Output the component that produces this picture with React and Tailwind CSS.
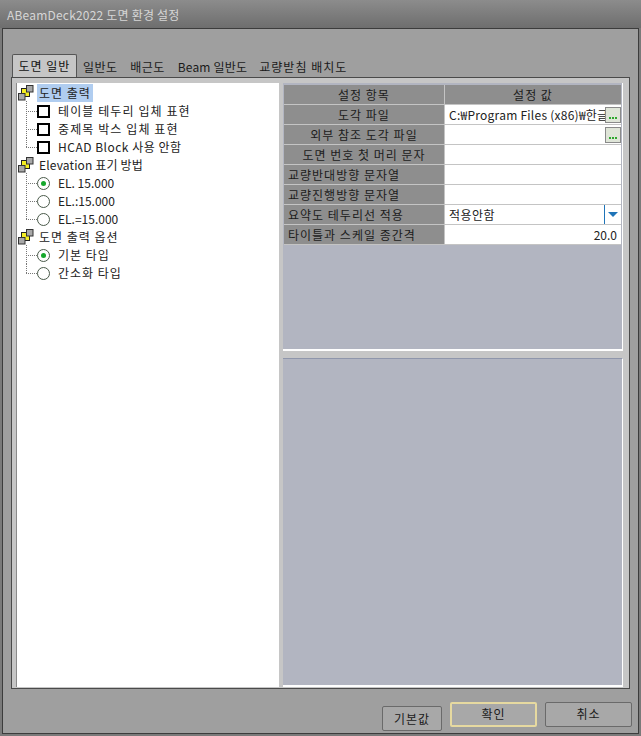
import React from 'react';

const font = { fontFamily: '"Noto Sans CJK KR", "Liberation Sans", sans-serif' };

// group icon of the tree: grey, yellow and grey squares
const GroupIcon = () => (
  <svg width="16" height="16" viewBox="0 0 16 16" className="shrink-0">
    <rect x="3.5" y="3.5" width="8" height="8" fill="#f4ee22" stroke="#222" />
    <rect x="8.5" y="0.5" width="6.5" height="6.5" fill="#a8a8a8" stroke="#333" />
    <rect x="0.5" y="8.5" width="6.5" height="6.5" fill="#a8a8a8" stroke="#333" />
  </svg>
);

const Dots = ({ last }) => (
  <div className="relative w-[11px] h-[18px] shrink-0">
    <div className={`absolute left-0 top-[-1px] w-px border-l border-dotted border-[#777] ${last ? 'h-[10px]' : 'h-[19px]'}`} />
    <div className="absolute left-0 top-[9px] w-[11px] border-t border-dotted border-[#777]" />
  </div>
);

const CheckItem = ({ label, last, track = 'tracking-[1.1px]' }) => (
  <div className="flex items-center h-[18px] pl-[9px]">
    <Dots last={last} />
    <div className="w-[13px] h-[13px] border-2 border-black bg-white shrink-0" />
    <span className={`ml-[8px] text-[12px] text-[#222] whitespace-nowrap ${track}`}>{label}</span>
  </div>
);

const RadioItem = ({ label, on, last, track = '' }) => (
  <div className="flex items-center h-[18px] pl-[9px]">
    <Dots last={last} />
    <div className="w-[13px] h-[13px] rounded-full border border-[#4a5a4a] bg-white shrink-0 flex items-center justify-center">
      {on && <div className="w-[5px] h-[5px] rounded-full bg-[#16a82c]" />}
    </div>
    <span className={`ml-[8px] text-[12px] text-[#222] whitespace-nowrap ${track}`}>{label}</span>
  </div>
);

const GroupItem = ({ label, selected, track = 'tracking-[1px]' }) => (
  <div className="flex items-center h-[18px] pl-[1px]">
    <GroupIcon />
    <span className={`ml-[3px] text-[12px] text-[#222] px-[2px] h-[18px] leading-[18px] whitespace-nowrap ${track} ${selected ? 'bg-[#b0cdf0]' : ''}`}>{label}</span>
  </div>
);

const EllipsisBtn = () => (
  <div className="w-[16px] h-[16px] border border-[#8a8a8a] bg-[#dfe5d8] shrink-0 flex items-end justify-center pb-[3px] gap-px">
    <i className="w-[2px] h-[2px] bg-[#2fa82f]" />
    <i className="w-[2px] h-[2px] bg-[#2fa82f]" />
    <i className="w-[2px] h-[2px] bg-[#2fa82f]" />
  </div>
);

const Row = ({ label, align = 'center', children }) => (
  <div className="flex h-[20px] border-b border-[#c4c4c4]">
    <div className={`w-[161px] shrink-0 bg-[#8e8e8e] border-r border-[#c4c4c4] text-[12px] leading-[19px] text-[#1c1c1c] whitespace-nowrap tracking-[1px] ${align === 'center' ? 'text-center' : 'text-left pl-[4px]'}`}>
      {label}
    </div>
    <div className="flex-1 min-w-0 bg-white flex items-center text-[12px] text-[#222]">{children}</div>
  </div>
);

export default function App() {
  return (
    <div style={font} className="w-[641px] h-[736px] overflow-hidden flex flex-col bg-[#7a7a7a]">
      {/* title bar */}
      <div className="h-[28px] shrink-0 bg-gradient-to-b from-[#8c8c8c] to-[#6e6e6e] pl-[7px] text-[12px] leading-[30px] text-[#d6d6d6] tracking-[0.2px]">
        ABeamDeck2022 도면 환경 설정
      </div>

      <div className="flex-1 mx-[2px] mb-[2px] border border-[#3c3c3c] bg-[#9f9f9f] flex flex-col">
        {/* tabs */}
        <div className="mt-[26px] h-[22px] pl-[9px] flex items-end relative z-10">
          <div className="h-[23px] w-[65px] bg-[#c6c6c6] border border-b-0 border-[#555] rounded-t-[2px] text-center text-[12px] leading-[21px] text-[#111] tracking-[1px]">
            도면 일반
          </div>
          <div className="flex h-[22px] text-[12px] leading-[24px] text-[#1a1a1a] whitespace-nowrap">
            <span className="ml-[6px] tracking-[0.4px]">일반도</span>
            <span className="ml-[13px] tracking-[0.4px]">배근도</span>
            <span className="ml-[13px] tracking-[0.2px]">Beam 일반도</span>
            <span className="ml-[12px] tracking-[1px]">교량받침 배치도</span>
          </div>
        </div>

        {/* tab page */}
        <div className="ml-[8px] mr-[8px] h-[612px] border border-[#4a4a4a] bg-[#c6c6c6] pl-[4px] pt-[5px] pr-[6px] pb-[1px] flex gap-[4px]">
          <div className="w-[263px] shrink-0 bg-white border-l border-[#8a8a8a] pt-[1px]">
            <GroupItem label="도면 출력" selected />
            <CheckItem label="테이블 테두리 입체 표현" />
            <CheckItem label="중제목 박스 입체 표현" />
            <CheckItem label="HCAD Block 사용 안함" last track="tracking-[0.5px]" />
            <GroupItem label="Elevation 표기 방법" track="tracking-[0.15px]" />
            <RadioItem label="EL. 15.000" on />
            <RadioItem label="EL.:15.000" />
            <RadioItem label="EL.=15.000" last />
            <GroupItem label="도면 출력 옵션" />
            <RadioItem label="기본 타입" on track="tracking-[1px]" />
            <RadioItem label="간소화 타입" last track="tracking-[1px]" />
          </div>

          <div className="flex-1 min-w-0 flex flex-col">
            {/* property grid */}
            <div className="h-[268px] shrink-0 bg-[#b2b5c1] border-b-2 border-r border-white pl-px pt-[2px] pr-px">
              <div className="flex h-[20px] border-b border-[#c4c4c4] bg-[#8e8e8e] text-[12px] leading-[19px] text-[#1c1c1c] text-center tracking-[1px]">
                <div className="w-[161px] shrink-0 border-r border-[#c4c4c4]">설정 항목</div>
                <div className="flex-1">설정 값</div>
              </div>
              <Row label="도각 파일">
                <span className="pl-[4px] flex-1 min-w-0 overflow-hidden whitespace-nowrap tracking-[0.25px]">C:₩Program Files (x86)₩한글과컴퓨터</span>
                <EllipsisBtn />
              </Row>
              <Row label="외부 참조 도각 파일">
                <span className="flex-1" />
                <EllipsisBtn />
              </Row>
              <Row label="도면 번호 첫 머리 문자" />
              <Row label="교량반대방향 문자열" align="left" />
              <Row label="교량진행방향 문자열" align="left" />
              <Row label="요약도 테두리선 적용" align="left">
                <span className="pl-[4px] flex-1 tracking-[0.5px]">적용안함</span>
                <div className="w-[17px] h-[19px] border-l border-[#1f74b8] flex items-center justify-center shrink-0">
                  <div className="w-0 h-0 border-x-[5px] border-x-transparent border-t-[5px] border-t-[#1f74b8]" />
                </div>
              </Row>
              <Row label="타이틀과 스케일 종간격" align="left">
                <span className="flex-1 text-right pr-[4px]">20.0</span>
              </Row>
            </div>
            {/* splitter */}
            <div className="h-[7px] shrink-0" />
            {/* description pane */}
            <div className="flex-1 bg-[#b2b5c1] border-t border-[#8f96ab] border-r border-r-white border-b-2 border-b-white" />
          </div>
        </div>

        {/* buttons */}
        <div className="flex-1">
          <div className="flex items-start justify-end gap-[8px] pt-[13px] pr-[6px] text-[12px] text-[#1a1a1a] tracking-[1px]">
            <div className="w-[60px] h-[25px] mt-[4px] border border-[#6a6a6a] rounded-[2px] bg-[#a8a8a8] text-center leading-[23px]">기본값</div>
            <div className="w-[87px] h-[25px] border-2 border-[#e6d9a0] rounded-[2px] bg-[#a8a8a8] text-center leading-[19px]">확인</div>
            <div className="w-[87px] h-[25px] border border-[#6a6a6a] rounded-[2px] bg-[#a8a8a8] text-center leading-[21px]">취소</div>
          </div>
        </div>
      </div>
    </div>
  );
}
